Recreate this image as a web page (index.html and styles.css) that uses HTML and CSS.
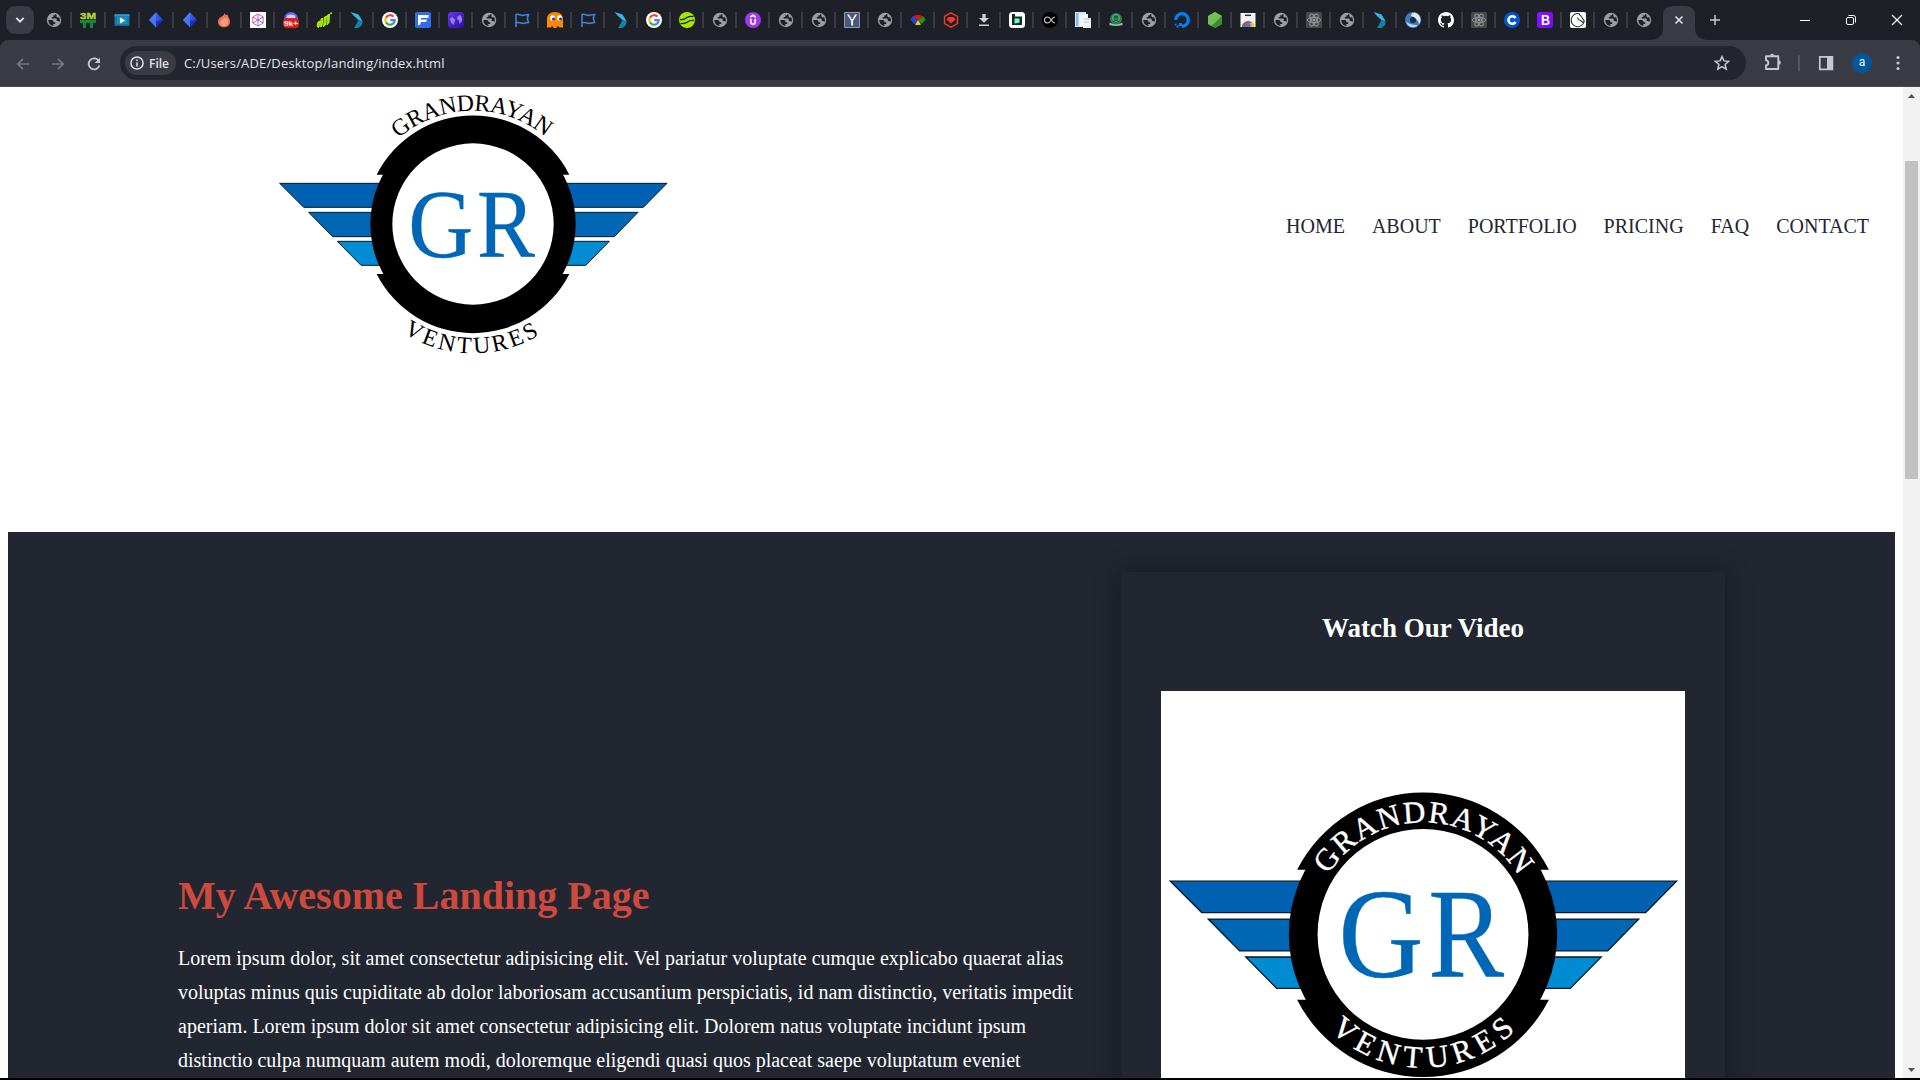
FILE: index.html
```html
<!DOCTYPE html>
<html lang="en">
<head>
<meta charset="utf-8">
<title>Landing</title>
<link rel="stylesheet" href="styles.css">
</head>
<body>
<svg class="defs" width="0" height="0" aria-hidden="true">
  <defs>
    <linearGradient id="gem" x1="0" x2="1" y1="0" y2="1"><stop offset="0" stop-color="#4d7bff"/><stop offset="1" stop-color="#1a2fd0"/></linearGradient>
    <linearGradient id="purp" x1="0" x2="1" y1="0" y2="1"><stop offset="0" stop-color="#6a35e8"/><stop offset="1" stop-color="#2a0f9e"/></linearGradient>
    <linearGradient id="boot" x1="0" x2="1" y1="0" y2="1"><stop offset="0" stop-color="#9013fe"/><stop offset="1" stop-color="#6610f2"/></linearGradient>
    <linearGradient id="hexl" x1="0" x2="1" y1="0" y2="1"><stop offset="0" stop-color="#f0507e"/><stop offset=".5" stop-color="#b04bd0"/><stop offset="1" stop-color="#4b8bf0"/></linearGradient>
    <symbol id="globe" viewBox="0 0 16 16"><circle cx="8" cy="8" r="7.200" fill="#9a9ea7"/><path d="M2.300 8H5.800Q7.500 8 7.500 9.600V10.300H9.200V12H7.300V13.900A6 6 0 0 1 2.300 8zM9 2.200V3.200H7.300V5H5.700V6.500H9.700Q10.700 6.500 10.700 7.500V9H12.200L13.500 10A6 6 0 0 0 13.200 5.200L11.500 5.500 10.500 4.500V2.600z" fill="#1d2127"/></symbol>
    <symbol id="threem" viewBox="0 0 16 16"><text x="0" y="7.200" font-size="9.500" font-weight="700" textLength="16" lengthAdjust="spacingAndGlyphs" fill="#b4d335" stroke="#b4d335" stroke-width=".4">3M</text><path d="M0 8h16v3h-3v5h-3v-5H6v5H3v-5H0z" fill="#0f8a3c"/></symbol>
    <symbol id="video" viewBox="0 0 16 16"><path d="M.5 2.300h15v11.500H.5z" fill="#1478a8"/><path d="M.5 2.300h15v2H.5z" fill="#2a98c8"/><path d="M3 5h10v7H3z" fill="#1f8ec4"/><path d="M6 5.500l5 3-5 3z" fill="#fff"/></symbol>
    <symbol id="diamond" viewBox="0 0 16 16"><path d="M8 .3L15 8l-7 7.500L1 8z" fill="url(#gem)"/><path d="M8 .3L8 15.500 1 8z" fill="#5687f5" opacity=".6"/><path d="M8 9l7-1-7 7.500z" fill="#1420a8" opacity=".6"/></symbol>
    <symbol id="flame" viewBox="0 0 16 16"><path d="M8.500 1c.5 2 2 2.500 3 1.500 0 2 2.500 4 2.500 7.300 0 3.300-2.700 5.500-6 5.500s-6-2.200-6-5.500C2 7 4 5.500 5 5c1.500-.7 3.300-2 3.500-4z" fill="#f5705c"/><path d="M5 9c1-1.500 3-3 5-3 1.500 1 2.500 3 2 5s-2.500 3-4.500 3S3.500 11 5 9z" fill="#ffa17c"/></symbol>
    <symbol id="hex" viewBox="0 0 16 16"><path d="M0 0h16v16H0z" fill="#fff"/><path d="M8 2l5.200 3v6L8 14l-5.200-3V5zM8 2v12M2.800 5l10.400 6M13.200 5L2.800 11" fill="none" stroke="url(#hexl)" stroke-width=".9"/></symbol>
    <symbol id="badge" viewBox="0 0 16 16"><circle cx="8" cy="7" r="7" fill="#5865f2"/><path d="M4 3.500q4-2 8 0l.5 2.500h-9z" fill="#cdd2ff"/><rect y="6" width="16" height="10" rx="4" fill="#e21b1b"/><text x="1" y="13.800" font-size="7.500" font-weight="700" textLength="14" lengthAdjust="spacingAndGlyphs" fill="#fff">9k+</text></symbol>
    <symbol id="bars" viewBox="0 0 16 16"><path d="M1 14l1-4 2-1-1 6-1 .5zM4 15l1-8 2-1-1 8zM7.500 14.500L8.500 5l2-1-1 9zM11 13l.5-10 2-1-.5 8.500z" fill="#a4ea0b" stroke="#a4ea0b"/><circle cx="15" cy="1.300" r="1" fill="#a4ea0b"/></symbol>
    <symbol id="dart" viewBox="0 0 16 16"><path d="M1.500 0L9.500 2.500 13.700 9.500 9.500 8 5 4z" fill="#36b7ea"/><path d="M13.700 9.500L13 13l-3.500 3H5l4.500-8z" fill="#1382a8"/></symbol>
    <symbol id="google" viewBox="0 0 16 16"><circle cx="8" cy="8" r="8" fill="#fff"/><g fill="none" stroke-width="2.200"><path d="M4 5.600a4.700 4.700 0 0 1 7.400-1" stroke="#ea4335"/><path d="M4 5.600a4.700 4.700 0 0 0 0 4.800" stroke="#fbbc05"/><path d="M4 10.400a4.700 4.700 0 0 0 7 1.300" stroke="#34a853"/><path d="M11 11.700a4.700 4.700 0 0 0 1.700-3.500H8.200" stroke="#4285f4"/></g></symbol>
    <symbol id="ef" viewBox="0 0 16 16"><rect width="16" height="16" rx="2" fill="#2f6cf0"/><path d="M3 3h10.500v3H6v1.500h6L11 10H6l-1 3H3z" fill="#fff"/></symbol>
    <symbol id="world" viewBox="0 0 16 16"><rect width="16" height="16" rx="3" fill="url(#purp)"/><path d="M2 6.500L4.500 5l1.500 2 1.500.5-1 2.500-.8 3Q2.500 11 2 6.500zM9.500 4.500L12 3q3 3 1.700 6.500L11.500 12 11 8.500 9 7z" fill="#9182e6"/></symbol>
    <symbol id="flag" viewBox="0 0 16 16"><path d="M2 15V2.500c3-1 4 1.300 7 .8 2-.3 3-.8 5.500-.8l-1.200 4 1.200 4c-3 0-4 1.200-6 .8S5 10 2 10.800" fill="none" stroke="#4480d0" stroke-width="1.600"/></symbol>
    <symbol id="ghost" viewBox="0 0 16 16"><path d="M0 16V7c0-4 3-7 8-7s8 3 8 7v9l-2-1-1 1-2-2-2 2H7l-2-2-2 2-1-1z" fill="#ff8800"/><ellipse cx="5.500" cy="6" rx="2.300" ry="2.800" fill="#fff"/><ellipse cx="12.500" cy="6" rx="2.300" ry="2.800" fill="#fff"/><circle cx="6.500" cy="7" r="1.500" fill="#2630d0"/><circle cx="13.500" cy="7" r="1.500" fill="#2630d0"/></symbol>
    <symbol id="lime" viewBox="0 0 16 16"><circle cx="8" cy="8" r="8" fill="#a8e800"/><path d="M1 7.500Q5 8 8 5.500 10 4 14.500 4.500M1.500 11.500Q6 12 8.500 10 11 8 15 8.500" fill="none" stroke="#1d2127" stroke-width="1.300"/></symbol>
    <symbol id="udemy" viewBox="0 0 16 16"><circle cx="8" cy="8" r="8" fill="#a435f0"/><path d="M5.300 5L8 3.300 10.700 5M5.800 6.800v3.200a2.200 2.200 0 0 0 4.400 0V6.800" fill="none" stroke="#fff" stroke-width="1.700"/></symbol>
    <symbol id="why" viewBox="0 0 16 16"><path d="M.5.5h15v15H.5z" fill="#435a85" stroke="#999"/><text x="2" y="13.500" font-size="16" font-weight="700" textLength="12" lengthAdjust="spacingAndGlyphs" fill="#fff" stroke="#101830" stroke-width=".5">Y</text></symbol>
    <symbol id="eye" viewBox="0 0 16 16"><path d="M8 8L2.500 4.600C5 2.500 11 2.500 13.500 4.600z" fill="#f01010"/><path d="M8 8L2.500 4.600.5 7.600 4 12z" fill="#1547f0"/><path d="M8 8l5.500-3.400 2 3L12 12z" fill="#0f9d20"/><path d="M8 8l-3 4.500q3 1 6 0z" fill="#f5c518"/></symbol>
    <symbol id="redhex" viewBox="0 0 16 16"><path d="M8 .8l6.500 3.600v7.200L8 15.200l-6.500-3.600V4.400z" fill="none" stroke="#f03a2c" stroke-width="1.400"/><path d="M5.500 5h5L12.500 7.500 8 11.500 3.500 7.500z" fill="#f03a2c"/></symbol>
    <symbol id="down" viewBox="0 0 16 16"><path d="M6.300 2h3.400v4H13L8 10.800 3 6h3.300zM3 12.500h10V14H3z" fill="#ced1d8"/></symbol>
    <symbol id="bee" viewBox="0 0 16 16"><rect width="16" height="16" rx="3.500" fill="#fff"/><path d="M3 2h3v2.500h7V13H3z" fill="#0c2c34"/><path d="M5.500 6.500h5v4.300l-5 .7z" fill="#82f5b0"/></symbol>
    <symbol id="alpha" viewBox="0 0 16 16"><circle cx="8" cy="8" r="8" fill="#000"/><path d="M13 5C9.500 5 9 11 5.500 11a3 3 0 0 1 0-6C9 5 9.500 11 13 11" fill="none" stroke="#ccc" stroke-width="1.100"/></symbol>
    <symbol id="docs" viewBox="0 0 16 16"><path d="M0 0h11v15H0z" fill="#cfe7f8"/><path d="M1 1h2.500v13H1z" fill="#7fc0e8"/><path d="M4 2h9v4h3v10H8v-2H4z" fill="#f3f5f8"/><path d="M8.500 7H15M9 10h5" stroke="#b8c8d4"/></symbol>
    <symbol id="turtle" viewBox="0 0 16 16"><circle cx="8" cy="7" r="6" fill="#2d8054"/><path d="M1.500 10.500q6.500 4 13 0V13q-6.500 2-13 0z" fill="#a7bab0"/><circle cx="8" cy="6" r="3.500" fill="none" stroke="#5bb17d"/><path d="M5 9.500q3-2 6 0M6 5h4" stroke="#124228" fill="none"/></symbol>
    <symbol id="ocean" viewBox="0 0 16 16"><path d="M8 14.300A6.300 6.300 0 1 0 1.700 8" fill="none" stroke="#0080ff" stroke-width="3.200"/><path d="M5 11h3v3H5zM2.500 13.500h2.300v2H2.500zM.7 11.700h1.800v1.800H.7z" fill="#0080ff"/></symbol>
    <symbol id="node" viewBox="0 0 16 16"><path d="M8 0l7 4v8l-7 4-7-4V4z" fill="#57a33e"/><path d="M8 0l7 4-10.500 10L1 12V4z" fill="#72bf54"/><path d="M15 4v8l-7 4-3.500-2z" fill="#438b38"/></symbol>
    <symbol id="store" viewBox="0 0 16 16"><path d="M.5 1h15v14H.5z" fill="#f2f2f2"/><path d="M5 3.300h6" stroke="#333" stroke-width="1.500"/><path d="M2 15a6 6 0 0 1 12 0z" fill="#e33b2e"/><path d="M2 15a6 6 0 0 1 .8-3L6 15z" fill="#2ba24c"/><path d="M9 11h4.500q.7 2 .5 4H9z" fill="#fbc116"/><circle cx="8" cy="13.500" r="2.700" fill="#3f7df0"/><path d="M0 15h16v1H0z" fill="#1d2127"/></symbol>
    <symbol id="react" viewBox="0 0 16 16"><rect width="16" height="16" rx="1.500" fill="#484848"/><g fill="none" stroke="#9b9b9b" stroke-width=".9"><ellipse cx="8" cy="8" rx="6.700" ry="2.600"/><ellipse cx="8" cy="8" rx="6.700" ry="2.600" transform="rotate(60 8 8)"/><ellipse cx="8" cy="8" rx="6.700" ry="2.600" transform="rotate(120 8 8)"/></g><circle cx="8" cy="8" r="1.300" fill="#aaa"/></symbol>
    <symbol id="swirl" viewBox="0 0 16 16"><circle cx="8" cy="8" r="5.500" fill="none" stroke="#3f78bd" stroke-width="5"/><path d="M9 .5A7.500 7.500 0 0 1 14 12.500Q13 6 6 4 6 1.500 9 .5z" fill="#dcebfa"/><path d="M1 9.500Q3 16 9.500 15.200 12 14.500 12.500 13 5 13 1 9.500z" fill="#b9d6f2"/><circle cx="8" cy="8" r="2.400" fill="#1d2b45"/></symbol>
    <symbol id="github" viewBox="0 0 16 16"><path d="M8 0C3.580 0 0 3.580 0 8c0 3.540 2.290 6.530 5.470 7.590.4.070.55-.17.55-.38 0-.19-.01-.82-.01-1.490-2.010.37-2.530-.49-2.690-.94-.09-.23-.48-.94-.82-1.130-.28-.15-.68-.52-.01-.53.63-.01 1.080.58 1.230.82.72 1.210 1.870.87 2.330.66.07-.52.28-.87.51-1.070-1.780-.2-3.640-.89-3.640-3.950 0-.87.31-1.590.82-2.150-.08-.2-.36-1.020.08-2.120 0 0 .67-.21 2.200.82a7.600 7.600 0 0 1 4 0c1.530-1.040 2.200-.82 2.200-.82.44 1.100.16 1.920.08 2.120.51.56.82 1.270.82 2.150 0 3.070-1.870 3.750-3.650 3.950.29.25.54.73.54 1.480 0 1.070-.01 1.930-.01 2.200 0 .21.15.46.55.38A8 8 0 0 0 16 8c0-4.420-3.580-8-8-8z" fill="#fff"/></symbol>
    <symbol id="cee" viewBox="0 0 16 16"><circle cx="8" cy="8" r="8" fill="#0056d2"/><path d="M11.500 6a3.800 3.800 0 1 0 0 4" fill="none" stroke="#fff" stroke-width="2.500"/></symbol>
    <symbol id="bootstrap" viewBox="0 0 16 16"><rect width="16" height="16" rx="2.500" fill="url(#boot)"/><text x="4" y="13" font-size="14" font-weight="700" textLength="9" lengthAdjust="spacingAndGlyphs" fill="#fff">B</text></symbol>
    <symbol id="knight" viewBox="0 0 16 16"><rect width="16" height="16" rx="2" fill="#fff"/><path d="M14.200 9.500A6.600 6.600 0 1 1 9 1.600L10 3.200Q11 3.500 12 5.500L14.300 9 13 10.500 10.500 8.500Q8 8 7.500 5.500" fill="none" stroke="#333" stroke-width="1.100"/></symbol>

    <g id="emblem">
      <g stroke="#0a1822" stroke-width="3">
        <path d="M-580-122H582L511-50H-508z" fill="#0060b1"/>
        <path d="M-493-35H495L424 38H-421z" fill="#0067b5"/>
        <path d="M-407 52H409L338 124H-336z" fill="#008bd2"/>
      </g>
      <circle r="308"/>
      <path d="M-289-148A324 324 0 0 1 289-148zM-289 150A324 324 0 0 0 289 150z"/>
      <circle r="242" fill="#fff"/>
      <g class="serif" font-size="293" fill="#0067b6" stroke="#0067b6">
        <text x="-194" y="98" textLength="195" lengthAdjust="spacingAndGlyphs">G</text>
        <text x="12" y="98" textLength="174" lengthAdjust="spacingAndGlyphs">R</text>
      </g>
    </g>
    <path id="topOuter" d="M-340 0A340 340 0 0 1 340 0"/>
    <path id="botOuter" d="M-388 0A388 388 0 0 0 388 0"/>
    <path id="topInner" d="M-257 0A257 257 0 0 1 257 0"/>
    <path id="botInner" d="M-306 0A306 306 0 0 0 306 0"/>
  </defs>
</svg>

<div class="tabstrip">
  <div class="search"><svg width="10" height="8" viewBox="0 0 10 8"><path d="M1.300 1.800L5 5.600l3.700-3.800" fill="none" stroke="#e3e3e8" stroke-width="1.800"/></svg></div>
  <div class="tabs">
    <div class="tab wide"><svg><use href="#globe"/></svg></div>
    <div class="tab wide"><svg><use href="#threem"/></svg></div>
    <div class="tab wide"><svg><use href="#video"/></svg></div>
    <div class="tab wide"><svg><use href="#diamond"/></svg></div>
    <div class="tab wide"><svg><use href="#diamond"/></svg></div>
    <div class="tab wide"><svg><use href="#flame"/></svg></div>
    <div class="tab"><svg><use href="#hex"/></svg></div>
    <div class="tab"><svg><use href="#badge"/></svg></div>
    <div class="tab"><svg><use href="#bars"/></svg></div>
    <div class="tab"><svg><use href="#dart"/></svg></div>
    <div class="tab"><svg><use href="#google"/></svg></div>
    <div class="tab"><svg><use href="#ef"/></svg></div>
    <div class="tab"><svg><use href="#world"/></svg></div>
    <div class="tab"><svg><use href="#globe"/></svg></div>
    <div class="tab"><svg><use href="#flag"/></svg></div>
    <div class="tab"><svg><use href="#ghost"/></svg></div>
    <div class="tab"><svg><use href="#flag"/></svg></div>
    <div class="tab"><svg><use href="#dart"/></svg></div>
    <div class="tab"><svg><use href="#google"/></svg></div>
    <div class="tab"><svg><use href="#lime"/></svg></div>
    <div class="tab"><svg><use href="#globe"/></svg></div>
    <div class="tab"><svg><use href="#udemy"/></svg></div>
    <div class="tab"><svg><use href="#globe"/></svg></div>
    <div class="tab"><svg><use href="#globe"/></svg></div>
    <div class="tab"><svg><use href="#why"/></svg></div>
    <div class="tab"><svg><use href="#globe"/></svg></div>
    <div class="tab"><svg><use href="#eye"/></svg></div>
    <div class="tab"><svg><use href="#redhex"/></svg></div>
    <div class="tab"><svg><use href="#down"/></svg></div>
    <div class="tab"><svg><use href="#bee"/></svg></div>
    <div class="tab"><svg><use href="#alpha"/></svg></div>
    <div class="tab"><svg><use href="#docs"/></svg></div>
    <div class="tab"><svg><use href="#turtle"/></svg></div>
    <div class="tab"><svg><use href="#globe"/></svg></div>
    <div class="tab"><svg><use href="#ocean"/></svg></div>
    <div class="tab"><svg><use href="#node"/></svg></div>
    <div class="tab"><svg><use href="#store"/></svg></div>
    <div class="tab"><svg><use href="#globe"/></svg></div>
    <div class="tab"><svg><use href="#react"/></svg></div>
    <div class="tab"><svg><use href="#globe"/></svg></div>
    <div class="tab"><svg><use href="#dart"/></svg></div>
    <div class="tab"><svg><use href="#swirl"/></svg></div>
    <div class="tab"><svg><use href="#github"/></svg></div>
    <div class="tab"><svg><use href="#react"/></svg></div>
    <div class="tab"><svg><use href="#cee"/></svg></div>
    <div class="tab"><svg><use href="#bootstrap"/></svg></div>
    <div class="tab"><svg><use href="#knight"/></svg></div>
    <div class="tab"><svg><use href="#globe"/></svg></div>
    <div class="tab last"><svg><use href="#globe"/></svg></div>
  </div>
  <svg class="active" width="56" height="34" viewBox="0 0 56 34"><path d="M0 34Q12 33 12 22V10Q12 0 22 0H34Q44 0 44 10V22Q44 33 56 34z" fill="#3a3b44"/><path d="M24.500 10.500l7 7M31.500 10.500l-7 7" stroke="#e3e3e8" stroke-width="1.600"/></svg>
  <svg class="plus" width="12" height="12" viewBox="0 0 12 12"><path d="M6 1v10M1 6h10" stroke="#c7c8d0" stroke-width="1.500"/></svg>
  <div class="window">
    <svg width="12" height="12" viewBox="0 0 12 12"><path d="M1 6.500h10" stroke="#fff"/></svg>
    <svg width="12" height="12" viewBox="0 0 12 12"><rect x="1.500" y="3.500" width="7" height="7" rx="1.500" fill="none" stroke="#fff"/><path d="M3.500 1.500H8.500Q10.500 1.500 10.500 3.500V8.500" fill="none" stroke="#fff"/></svg>
    <svg width="12" height="12" viewBox="0 0 12 12"><path d="M1 1l10 10M11 1L1 11" stroke="#fff" stroke-width="1.100"/></svg>
  </div>
</div>

<div class="toolbar">
  <svg class="back" width="14" height="12" viewBox="0 0 14 12"><path d="M13 6H2M7 .8L1.800 6 7 11.200" fill="none" stroke="#76777f" stroke-width="1.700"/></svg>
  <svg class="fwd" width="14" height="12" viewBox="0 0 14 12"><path d="M1 6h11M7 .8L12.200 6 7 11.200" fill="none" stroke="#76777f" stroke-width="1.700"/></svg>
  <svg class="reload" width="14" height="14" viewBox="0 0 14 14"><path d="M12 4.300A5.500 5.500 0 1 0 12.400 8.500" fill="none" stroke="#c7c8d0" stroke-width="1.800"/><path d="M13 .7V6H7.700l2-2z" fill="#c7c8d0"/></svg>
  <div class="omnibox">
    <div class="chip"><svg width="14" height="14" viewBox="0 0 14 14"><circle cx="7" cy="7" r="6.100" fill="none" stroke="#e3e3e8" stroke-width="1.500"/><path d="M7 6.200v4.200M7 3.400v1.600" stroke="#e3e3e8" stroke-width="1.500"/></svg><span class="file">File</span></div>
    <span class="url">C:/Users/ADE/Desktop/landing/index.html</span>
    <svg class="star" width="16" height="16" viewBox="0 0 16 16"><path d="M8 1.500l1.900 4.400 4.800.4-3.600 3.200 1.100 4.700L8 11.700l-4.200 2.500 1.100-4.700L1.300 6.300l4.800-.4z" fill="none" stroke="#c7c8d0" stroke-width="1.500"/></svg>
  </div>
  <svg class="puzzle" width="18" height="18" viewBox="0 0 18 18"><path d="M2 3.300h12.300v12.700H2v-3.500q2.300-.5 2.300-2.600T2 7.200z" fill="none" stroke="#c7c8d0" stroke-width="1.900" stroke-linejoin="round"/><path d="M6 2.800a2.100 2.100 0 0 1 4.200 0zM14.500 7.300a2.100 2.100 0 0 1 0 4.600z" fill="#c7c8d0"/></svg>
  <span class="rule"></span>
  <svg class="panel" width="16" height="16" viewBox="0 0 16 16"><path d="M1.800 1.800h12.600v12.600H1.800z" fill="none" stroke="#c7c8d0" stroke-width="1.700"/><path d="M9 1.500h5.500v13H9z" fill="#c7c8d0"/></svg>
  <span class="avatar">a</span>
  <svg class="dots" width="4" height="16" viewBox="0 0 4 16"><g fill="#c7c8d0"><circle cx="2" cy="2.500" r="1.600"/><circle cx="2" cy="8" r="1.600"/><circle cx="2" cy="13.500" r="1.600"/></g></svg>
</div>

<div class="view">
  <div class="page">
    <header class="header">
      <svg class="logo" width="400" height="266" viewBox="-600 -399 1200 798">
        <use href="#emblem"/>
        <g class="serif" font-size="71">
          <text textLength="480"><textPath href="#topOuter" startOffset="290" textLength="480">GRANDRAYAN</textPath></text>
          <text textLength="430"><textPath href="#botOuter" startOffset="388" textLength="430">VENTURES</textPath></text>
        </g>
      </svg>
      <nav class="nav"><a>HOME</a><a>ABOUT</a><a>PORTFOLIO</a><a>PRICING</a><a>FAQ</a><a>CONTACT</a></nav>
    </header>
    <section class="hero">
      <div class="intro">
        <h1>My Awesome Landing Page</h1>
        <p>Lorem ipsum dolor, sit amet consectetur adipisicing elit. Vel pariatur voluptate cumque explicabo quaerat alias<br>voluptas minus quis cupiditate ab dolor laboriosam accusantium perspiciatis, id nam distinctio, veritatis impedit<br>aperiam. Lorem ipsum dolor sit amet consectetur adipisicing elit. Dolorem natus voluptate incidunt ipsum<br>distinctio culpa numquam autem modi, doloremque eligendi quasi quos placeat saepe voluptatum eveniet</p>
      </div>
      <div class="card">
        <h2>Watch Our Video</h2>
        <svg class="poster" width="524" height="524" viewBox="-601.400 -558.500 1202.700 1202.700">
          <use href="#emblem"/>
          <g class="serif" font-size="71" fill="#fff" stroke="#fff">
            <text textLength="522"><textPath href="#topInner" startOffset="144" textLength="522">GRANDRAYAN</textPath></text>
            <text textLength="470"><textPath href="#botInner" startOffset="245" textLength="470">VENTURES</textPath></text>
          </g>
        </svg>
      </div>
    </section>
  </div>
  <div class="scrollbar">
    <svg width="17" height="17" viewBox="0 0 17 17"><path d="M5 11l3.500-4L12 11z" fill="#505050"/></svg>
    <div class="thumb"></div>
    <svg class="down" width="17" height="17" viewBox="0 0 17 17"><path d="M5 7l3.500 4L12 7z" fill="#505050"/></svg>
  </div>
</div>
<div class="taskbar"></div>
</body>
</html>
```
FILE: styles.css
```css
* { box-sizing: border-box; }
body {
  margin: 0;
  width: 1920px;
  height: 1080px;
  overflow: hidden;
  display: flex;
  flex-direction: column;
  background: #1d2127;
  font-family: "Open Sans", "Noto Sans", sans-serif;
}
svg { display: block; flex: none; }
.defs { position: absolute; }
.serif { font-family: "Liberation Serif", serif; }

.tabstrip {
  height: 40px;
  flex: none;
  display: flex;
  padding-left: 6px;
  background: #1d2127;
  font-family: "Liberation Sans", sans-serif;
}
.search {
  width: 28px;
  height: 28px;
  margin-top: 6px;
  margin-right: 4px;
  border-radius: 9px;
  background: #3a3b44;
  display: flex;
  align-items: center;
  justify-content: center;
}
.tabs { display: flex; height: 40px; align-items: center; }
.tab {
  width: 33px;
  height: 16px;
  padding-left: 8px;
  border-right: 2px solid #3a3b44;
}
.tab.wide { width: 34px; }
.tab.last { width: 23px; padding-right: 0; border: 0; }
.tab svg { width: 16px; height: 16px; }
.active { margin-top: 6px; }
.plus { margin: 14px 0 0 2px; }
.window { display: flex; gap: 34px; margin: 14px 17px 0 auto; }

.toolbar {
  height: 47px;
  flex: none;
  display: flex;
  align-items: center;
  padding: 0 20px 1px 16px;
  background: #3a3b44;
  border-bottom: 1px solid #4a4b53;
  border-radius: 8px 8px 0 0;
}
.back { margin-top: 2px; }
.fwd { margin: 2px 0 0 21px; }
.reload { margin: 2px 0 0 22px; }
.omnibox {
  width: 1626px;
  height: 34px;
  margin: 1px 0 0 19px;
  padding: 0 16px 0 5px;
  border-radius: 17px;
  background: #24262f;
  display: flex;
  align-items: center;
  color: #e3e3e8;
}
.chip {
  width: 51px;
  height: 24px;
  padding-left: 5px;
  border-radius: 12px;
  background: #3a3b44;
  display: flex;
  align-items: center;
  gap: 5px;
}
.file { font-size: 12px; font-weight: 600; }
.url { margin-left: 8px; font-size: 13px; letter-spacing: .16px; white-space: nowrap; }
.star { margin-left: auto; }
.puzzle { margin: -1px 0 0 18px; }
.rule { width: 2px; height: 16px; margin-left: 16px; background: #55565f; }
.panel { margin: 1px 0 0 18px; }
.avatar {
  width: 20px;
  height: 20px;
  margin-left: 18px;
  border-radius: 50%;
  background: #00579c;
  color: #fff;
  font: 12px/19px Roboto, sans-serif;
  text-align: center;
}
.dots { margin: 1px 0 0 24px; }

.view { height: 991px; flex: none; display: flex; background: #fff; overflow: hidden; }
.page {
  width: 1903px;
  padding: 0 8px;
  flex: none;
  font-family: "Liberation Serif", "Times New Roman", serif;
}
.header {
  height: 445px;
  display: flex;
  align-items: flex-start;
  justify-content: space-between;
  padding: 4px 26px 0 265px;
}
.logo { overflow: visible; }
.nav { display: flex; gap: 27px; margin-top: 124px; font-size: 20px; line-height: 23px; color: #222630; }
.hero {
  height: 800px;
  padding: 40px 170px 0;
  display: flex;
  justify-content: space-between;
  background: #222630;
  color: #fff;
}
.intro { padding-top: 301px; white-space: nowrap; }
.intro h1 { margin: 0 0 22px; font-size: 40px; line-height: 46px; color: #cf4a3e; }
.intro p { margin: 0; font-size: 20px; line-height: 34px; }
.card {
  width: 604px;
  padding: 40px;
  background: #222630;
  box-shadow: 0 0 24px rgba(0, 0, 0, .4);
}
.card h2 { margin: 0 0 47px; font-size: 27px; line-height: 32px; text-align: center; }
.poster { background: #fff; }

.scrollbar { width: 17px; height: 991px; background: #f1f1f1; display: flex; flex-direction: column; }
.thumb { width: 13px; height: 318px; margin: 57px 0 0 2px; background: #c1c1c1; }
.scrollbar .down { margin-top: auto; }
.taskbar { height: 2px; flex: none; background: #000; }
```
